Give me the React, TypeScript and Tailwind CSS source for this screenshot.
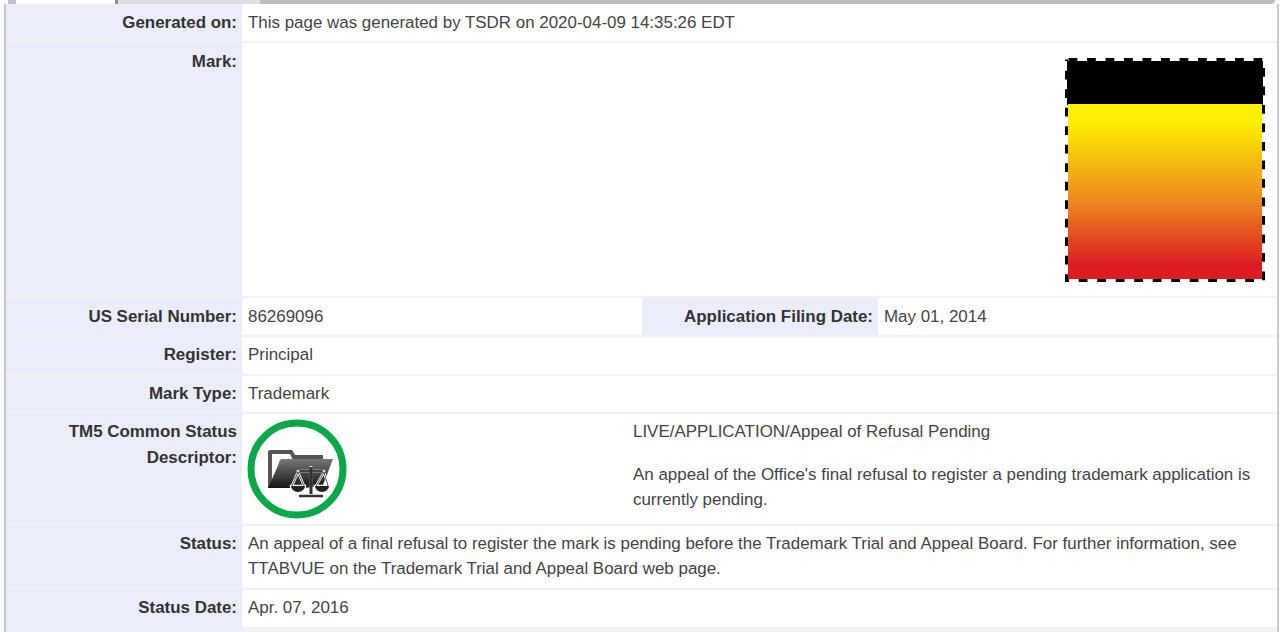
import type { ReactNode } from "react";

function Label({ children, pt = "pt-[5px]" }: { children: ReactNode; pt?: string }) {
  return (
    <div className={`w-[236px] shrink-0 bg-[#ebeefa] pr-[5px] text-right font-bold leading-[25px] text-[#333] ${pt}`}>
      {children}
    </div>
  );
}

function Row({ label, children, h, pt = "pt-[5px]" }: { label: ReactNode; children: ReactNode; h: string; pt?: string }) {
  return (
    <div className={`flex border-b-2 border-[#f2f2f2] ${h}`}>
      <Label pt={pt}>{label}</Label>
      <div className={`flex-1 pl-[6px] leading-[25px] text-[#444] ${pt}`}>{children}</div>
    </div>
  );
}

function StatusIcon() {
  return (
    <svg width="100" height="100" viewBox="0 0 100 100">
      <defs>
        <linearGradient id="folder" x1="0" y1="0" x2="0" y2="1">
          <stop offset="0" stopColor="#777" />
          <stop offset="1" stopColor="#151515" />
        </linearGradient>
      </defs>
      <circle cx="50" cy="50" r="46" fill="#fff" stroke="#0ba84a" strokeWidth="7" />
      <path d="M21 33 Q21 31 23 31 L45 31 L48 36 L76 36 L76 41 L46 41 L43 35 L25 35 L25 64 L33 41 L38 41 L27 69 L21 69 Z" fill="#555" />
      <path d="M34 40 L86 40 L76 66 L58 69 L21 69 Z" fill="url(#folder)" />
      <g stroke="#fff" strokeWidth="2.5" fill="none">
        <path d="M49 52 L79 52 M64 47 L64 77 M52 77 L76 77" />
        <path d="M51 53 L45 67 M51 53 L57 67 M77 53 L69 67 M77 53 L81 67" />
        <path d="M44 67 L58 67 A7 6 0 0 1 44 67 Z M68 67 L82 67 A7 6 0 0 1 68 67 Z" />
      </g>
      <path d="M50 52 L78 52" stroke="#444" strokeWidth="2" fill="none" />
      <path d="M64 48 L64 75" stroke="#333" strokeWidth="3" fill="none" />
      <path d="M52 77 L76 77" stroke="#333" strokeWidth="2.5" fill="none" />
      <path d="M51 53 L45 67 M51 53 L57 67 M77 53 L69 67 M77 53 L81 67" stroke="#555" strokeWidth="1" fill="none" />
      <circle cx="51" cy="52" r="2" fill="#ddd" stroke="#444" strokeWidth="1" />
      <circle cx="77" cy="52" r="2" fill="#ddd" stroke="#444" strokeWidth="1" />
      <path d="M44 67 L58 67 A7 6 0 0 1 44 67 Z" fill="#222" />
      <path d="M68 67 L82 67 A7 6 0 0 1 68 67 Z" fill="#222" />
    </svg>
  );
}

function MarkImage() {
  return (
    <svg width="202" height="226" viewBox="0 0 202 226" className="block">
      <defs>
        <linearGradient id="mark" x1="0" y1="0" x2="0" y2="1">
          <stop offset="0" stopColor="#fff200" />
          <stop offset="0.12" stopColor="#fdec02" />
          <stop offset="0.55" stopColor="#ed8a1f" />
          <stop offset="0.92" stopColor="#dc1c22" />
          <stop offset="1" stopColor="#dc1c22" />
        </linearGradient>
      </defs>
      <rect x="2" y="3" width="196" height="44" fill="#000" />
      <rect x="3" y="46" width="194" height="175" fill="url(#mark)" />
      <rect
        x="1.5"
        y="1.5"
        width="197"
        height="221"
        fill="none"
        stroke="#000"
        strokeWidth="3"
        strokeDasharray="8.8 9.7"
        strokeDashoffset="-2"
      />
    </svg>
  );
}

export default function App() {
  return (
    <div className="h-[632px] w-[1280px] overflow-hidden bg-white font-['Liberation_Sans',Arial,sans-serif] text-[16.93px]">
      <div className="flex h-[4px]">
        <div className="w-[8px] bg-white" />
        <div className="w-[8px] bg-[#c4c4c4]" />
        <div className="w-[99px] bg-white" />
        <div className="w-[3px] bg-[#8f8f8f]" />
        <div className="w-[142px] bg-[#dedede]" />
        <div className="w-[1015px] rounded-br-[4px] bg-[#bdbdbd]" />
      </div>
      <div className="ml-[4px] mr-[1px] h-[628px] overflow-hidden border-x-2 border-[#c8c8c8] bg-[#f2f2f2]">
        <div className="bg-white">
          <Row label="Generated on:" h="h-[39px]" pt="pt-[6px]">
            This page was generated by TSDR on 2020-04-09 14:35:26 EDT
          </Row>
          <div className="flex h-[255px] border-b-2 border-[#f2f2f2]">
            <Label pt="pt-[6px]">Mark:</Label>
            <div className="flex flex-1 justify-end pr-[10px] pt-[15px]">
              <MarkImage />
            </div>
          </div>
          <div className="flex h-[39px] border-b-2 border-[#f2f2f2]">
            <Label pt="pt-[6px]">US Serial Number:</Label>
            <div className="w-[400px] shrink-0 pl-[6px] pt-[6px] leading-[25px] text-[#444]">86269096</div>
            <Label pt="pt-[6px]">Application Filing Date:</Label>
            <div className="flex-1 pl-[6px] pt-[6px] leading-[25px] text-[#444]">May 01, 2014</div>
          </div>
          <Row label="Register:" h="h-[39px]">
            Principal
          </Row>
          <Row label="Mark Type:" h="h-[38px]">
            Trademark
          </Row>
          <div className="flex h-[112px] border-b-2 border-[#f2f2f2]">
            <div className="w-[236px] shrink-0 bg-[#ebeefa] pr-[5px] pt-[5px] text-right font-bold leading-[26px] text-[#333]">
              TM5 Common Status
              <br />
              Descriptor:
            </div>
            <div className="w-[391px] shrink-0 pl-[5px] pt-[5px]">
              <StatusIcon />
            </div>
            <div className="flex-1 pt-[5px] leading-[25px] text-[#444]">
              <p>LIVE/APPLICATION/Appeal of Refusal Pending</p>
              <p className="mt-[18px]">
                An appeal of the Office's final refusal to register a pending trademark application is currently pending.
              </p>
            </div>
          </div>
          <Row label="Status:" h="h-[64px]">
            An appeal of a final refusal to register the mark is pending before the Trademark Trial and Appeal Board. For further information, see TTABVUE on the Trademark Trial and Appeal Board web page.
          </Row>
          <div className="flex h-[37px]">
            <Label>Status Date:</Label>
            <div className="flex-1 pl-[6px] pt-[5px] leading-[25px] text-[#444]">Apr. 07, 2016</div>
          </div>
        </div>
        <div className="h-[8px] w-[236px] bg-[#ebeefa]" />
      </div>
    </div>
  );
}
